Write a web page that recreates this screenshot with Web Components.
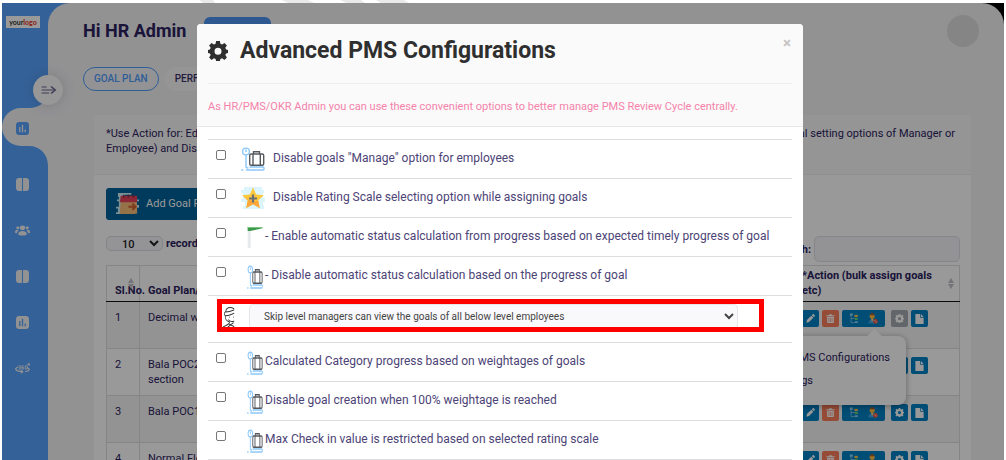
<!DOCTYPE html>
<html lang="en">
<head>
<meta charset="utf-8">
<title>Advanced PMS Configurations</title>
<style>
  html, body { margin: 0; height: 100%; background: #fff; }
  body { font-family: Roboto, "Liberation Sans", sans-serif; color: #2c2260; overflow: hidden; }
</style>
</head>
<body>
<pms-app></pms-app>

<script>
const define = (name, html, setup) => {
  const tpl = document.createElement('template');
  tpl.innerHTML = '<style>*{box-sizing:border-box}:host([hidden]){display:none}</style>' + html;
  customElements.define(name, class extends HTMLElement {
    connectedCallback() {
      if (this.shadowRoot) return;
      this.attachShadow({ mode: 'open' }).append(tpl.content.cloneNode(true));
      if (setup) setup.call(this, this.shadowRoot);
    }
  });
};

const ICONS = {
  gear: '<path fill="currentColor" fill-rule="evenodd" d="M9.700 0h4.600l.6 3.300 2 .9 2.800-1.900 3 3-1.900 2.800.9 2 2.300.6v3.600l-2.300.6-.9 2 1.900 2.800-3 3-2.800-1.900-2 .9-.6 2.300H9.700l-.6-2.300-2-.9-2.800 1.900-3-3 1.900-2.800-.9-2L0 14.300v-3.600l2.300-.6.9-2-1.900-2.800 3-3 2.800 1.900 2-.9zM12 8a4.200 4.200 0 1 0 0 8.400A4.200 4.200 0 1 0 12 8z"/>',
  luggage: '<g fill="none" stroke="#8cc8fa" stroke-width="1.400" stroke-linecap="round"><circle cx="5" cy="4.500" r="3.400"/><path d="M5 8v11.500M5 3v1.600M9 20h13c1.400 0 1.400 3 0 3H5.500M.8 23h1M5 19.500c0 1.500 1 1.500 2 1.500"/></g><g fill="#fff" stroke="#55595e" stroke-width="1.400"><path d="M12.500 7V4.800h6V7" fill="none"/><rect x="8.700" y="7" width="14" height="11.300" rx="1.500"/><path d="M12 7v11.300M19.300 7v11.300"/></g>',
  star: '<path d="M3 1h18v3h2v3h-1v5h2v4h-2v3h1v4H2v-3h2v-4H0v-3h2V7H0V4h3z" fill="#dcf5fc"/><path d="M12 1.500l3.200 6.900 7.600.9-5.600 5.200 1.500 7.500L12 18.300 5.300 22l1.500-7.500L1.200 9.300l7.600-.9z" fill="#fdc83b"/><path d="M1.200 9.300l5.600 5.200L5.300 22l6.700-3.700 6.700 3.700-1.500-7.500c-5 2-10 0-16-5.200z" fill="#fda63a"/><path d="M12 8.500v8M8 12.500h8" stroke="#6b6f78" stroke-width="2.200"/>',
  flag: '<path d="M1 1h4.500v21H1z" fill="#e6eaeb"/><path d="M1 1h22v1.200L5 5H1z" fill="#3d9a4a"/><path d="M1 1h22v1H1z" fill="#79c580"/>',
  person: '<g fill="none" stroke="#333" stroke-width="1.300" stroke-linecap="round"><path d="M22 2C15-1 7 1 7 5.500 3 7 4 9 6 10.500c-1 4 3 6.500 8 7.500M7 6c6 0 10-1 15-2.500M6 10.500c7 0 10-1.500 16-3"/><path d="M12 15.500c3 2 6 2.500 10 1.500M14 18c0 3-7 4-12 6M21 19l-10 5M13 20.500l9 3"/><path d="M14 12h.3M21 12h.3"/></g>',
  toggle: '<g fill="none" stroke="currentColor" stroke-width="2.400"><path d="M1 6h8M1 12h21M1 18h12"/><path d="M16 5l7 7-7 7"/></g>',
  chart: '<rect width="24" height="24" rx="6" fill="currentColor"/><path d="M7 9v10M12 5v14M17 14v5" stroke="var(--bars)" stroke-width="2.400"/>',
  columns: '<path d="M6 0h5v24H6a6 6 0 0 1-6-6V6a6 6 0 0 1 6-6zM13 0h5a6 6 0 0 1 6 6v12a6 6 0 0 1-6 6h-5z" fill="currentColor"/>',
  users: '<g fill="currentColor"><circle cx="12" cy="7" r="4.200"/><circle cx="4.500" cy="7" r="2.600"/><circle cx="19.500" cy="7" r="2.600"/><path d="M5 19c0-8 14-8 14 0 0 3-14 3-14 0zM0 15c0-4 3-5 6-4-2 2-3 4-3 6-2 0-3-.5-3-2zM24 15c0-4-3-5-6-4 2 2 3 4 3 6 2 0 3-.5 3-2z"/></g>',
  r360: '<g fill="none" stroke="currentColor" stroke-width="2"><path d="M5 9c-6 3-5 7 4 8.500l3 .3M19 10c5 2 6 6-3 7.700M9 14.500l3.500 3.300L9 21"/><path d="M5.500 7h3v6h-3M6 10h2M11 13V7h3M11 10h3v3h-3M16.500 7h3v6h-3z" stroke-width="1.300"/><circle cx="22" cy="4.500" r="1"/></g>',
  calendar: '<path d="M2 0h14v2H9v2h9v3h6v2h-3v4h3v3h-4v3h2v3H5v1H0v-2h2v-4H0v-2h3V9H1V7h2V4H2z" fill="#cdeff8"/><path d="M5 8h17v14l-3 1H4z" fill="#fbbf7b"/><path d="M5 3h17v7H4z" fill="#e8415d"/><path d="M8 2v3M13 2v3M18 2v3" stroke="#7d2f48" stroke-width="1.600"/><path d="M13 15h7M17 11.500l3.500 3.500-3.500 3.500" fill="none" stroke="#d4632d" stroke-width="2"/>',
  pencil: '<path d="M1 23l1.500-7L14 4.500l5.500 5.500L8 21.500zM15.500 3L18 .8c1-.8 2-.8 3 0L23.200 3c.8 1 .8 2 0 3L21 8.500z" fill="currentColor"/>',
  trash: '<path d="M1 3h7l1-2.500h6L16 3h7v3H1z" fill="currentColor"/><path fill="currentColor" fill-rule="evenodd" d="M3 7.500h18V21c0 2-1 3-3 3H6c-2 0-3-1-3-3zM7 10v11h1.600V10zM11.200 10v11h1.600V10zM15.400 10v11H17V10z"/>',
  file: '<path d="M1 0h13v9h9v15H1z" fill="currentColor"/><path d="M16 0l7 7h-7z" fill="currentColor"/>',
  tree: '<g stroke="#a9d8f0" stroke-width="1.500" fill="none"><path d="M5 4v17h9M5 12h9"/></g><path d="M2 1h7v5H2zM14 18h7v4h-7z" fill="#8fd3f2"/><path d="M13 4h8v5h-8z" fill="#ffc94d"/><path d="M14 11h7v4h-7z" fill="#6fdc6a"/>',
  userblock: '<circle cx="10" cy="7" r="6" fill="#ffbf3f"/><path d="M5 5c0-7 10-7 10 0z" fill="#a65b2b"/><path d="M1 23c0-6 4-9 9-9s9 3 9 9z" fill="#3fa4e8"/><path d="M7 13h6l-3 7z" fill="#ffd58a"/><circle cx="18" cy="18" r="5.500" fill="#f0553f"/><path d="M14.500 15l7 6" stroke="#fff" stroke-width="1.400"/>'
};

define('app-icon', `<style>
  :host { display: block; flex: none; width: 13px; height: 13px; }
  svg { display: block; width: 100%; height: 100%; overflow: visible; }
</style><svg viewBox="0 0 24 24" preserveAspectRatio="none" aria-hidden="true"></svg>`,
function (root) { root.querySelector('svg').innerHTML = ICONS[this.getAttribute('name')] || ''; });

define('top-strip', `<style>
  :host { display: block; height: 3px; overflow: hidden; }
  svg { display: block; }
</style><svg width="420" height="3" aria-hidden="true"><path fill="#e9e9e9" d="M197 0h14l2 3h-12zM280 0h26l6 3h-26zM338 0h21l4 3h-19zM374 0h28l5 3h-28z"/></svg>`);

define('pms-sidebar', `<style>
  :host { display: block; background: #58a3fd; color: #f4f4f4; --bars: #58a3fd; padding-top: 13px; }
  .logo { display: block; width: 34px; margin-left: 4px; background: #fff; color: #333; font: 700 7px/12px Lato, sans-serif; text-align: center; text-decoration: none; }
  .logo b { color: #e8392b; }
  nav { margin-top: 62px; display: flex; flex-direction: column; }
  a { color: inherit; }
  .item { display: flex; height: 46px; align-items: center; padding-left: 14px; }
  .active { position: relative; height: 76px; color: #58a3fd; --bars: #f3f3f6; margin-bottom: -5px; }
  .active svg { position: absolute; inset: 0; }
  .active app-icon { position: relative; }
  .wide { width: 15px; height: 13px; margin-left: -1px; }
</style>
<a class="logo" href="#" aria-label="Home">your<b>logo</b></a>
<nav aria-label="Main">
  <a class="item active" href="#" aria-label="Dashboard">
    <svg width="46" height="76" viewBox="0 0 46 76" aria-hidden="true"><path fill="#f3f3f6" d="M46 0C46 11 38 18 27 18H19a19 19 0 0 0 0 38h8C38 56 46 64 46 76z"/></svg>
    <app-icon name="chart"></app-icon></a>
  <a class="item" href="#" aria-label="Boards"><app-icon name="columns"></app-icon></a>
  <a class="item" href="#" aria-label="Team"><app-icon class="wide" name="users"></app-icon></a>
  <a class="item" href="#" aria-label="Plans"><app-icon name="columns"></app-icon></a>
  <a class="item" href="#" aria-label="Reports"><app-icon name="chart"></app-icon></a>
  <a class="item" href="#" aria-label="360 feedback"><app-icon class="wide" name="r360"></app-icon></a>
</nav>`);

define('page-header', `<style>
  :host { display: block; padding: 12px 25px 0 35px; }
  header { display: flex; align-items: center; height: 32px; }
  h1 { margin: 0; font-size: 18px; line-height: 28px; font-weight: 700; flex: none; min-width: 121px; }
  .primary { width: 67px; height: 28px; border: 0; border-radius: 6px; background: #4c94f0; }
  .avatar { width: 32px; height: 32px; margin-left: auto; border-radius: 50%; background: #dedede; border: 0; }
  .tabs { display: flex; gap: 5px; margin-top: 20px; }
  .tabs button { height: 24px; border: 1px solid #f9f9fb; border-radius: 12px; background: #f9f9fb; font: 500 10px/20px Roboto, sans-serif; color: #3a3166; padding: 0 10px; white-space: nowrap; }
  .tabs .on { border-color: #4f9bfa; color: #4f9bfa; background: #f6f6f9; }
</style>
<header><h1>Hi HR Admin</h1><button class="primary" aria-label="Create"></button><button class="avatar" aria-label="Profile"></button></header>
<div class="tabs"><button class="on">GOAL PLAN</button><button>PERFORMANCE</button></div>`);

define('action-buttons', `<style>
  :host { display: flex; gap: 3px; }
  button { display: flex; align-items: center; justify-content: center; gap: 9px; width: 17px; height: 17px; padding: 0; border: 0; border-radius: 2px; background: #0080c4; color: #fff; }
  app-icon { width: 9px; height: 9px; }
  .trash { background: #fb7d5c; }
  .group { width: 43px; margin-right: 3px; }
  .group app-icon { width: 10px; height: 11px; }
  :host([muted]) .gear { background: #a3a9b0; }
  .copy app-icon { height: 10px; }
</style>
<button aria-label="Edit"><app-icon name="pencil"></app-icon></button>
<button class="trash" aria-label="Delete"><app-icon name="trash"></app-icon></button>
<button class="group" aria-label="Assign"><app-icon name="tree"></app-icon><app-icon name="userblock"></app-icon></button>
<button class="gear" aria-label="Settings"><app-icon name="gear"></app-icon></button>
<button class="copy" aria-label="Copy"><app-icon name="file"></app-icon></button>`);

define('row-popover', `<style>
  :host { display: block; width: 190px; padding: 14px 16px 16px; border-radius: 8px; background: #fff; box-shadow: 0 1px 6px rgba(0,0,0,.35); }
  :host::before { content: ""; position: absolute; top: -5px; right: 26px; width: 11px; height: 11px; background: #fff; transform: rotate(45deg); }
  a { display: block; font-size: 11px; line-height: 16px; color: #2c2260; text-decoration: none; text-align: right; white-space: nowrap; }
  a + a { margin-top: 7px; padding-right: 77px; }
</style><a href="#">Advanced PMS Configurations</a><a href="#">Settings</a>`);

define('goal-panel', `<style>
  :host { display: block; margin: 24px 33px 0 46px; background: #fff; font-size: 11px; line-height: 15px; }
  .info { min-height: 60px; padding: 11px 12px; background: #f8f8f8; border-bottom: 1px solid #eee; }
  .info p { margin: 0; display: flex; justify-content: space-between; white-space: nowrap; }
  .info p span:last-child { padding-right: 4px; }
  .body { position: relative; padding: 13px 11px 13px 12px; }
  .add { display: flex; align-items: center; gap: 7px; height: 32px; width: 150px; padding: 0 10px; border: 0; border-radius: 3px; background: #006199; color: #fff; font: 400 11px/16px Roboto, sans-serif; white-space: nowrap; }
  .add app-icon { width: 23px; height: 22px; }
  .tools { display: flex; justify-content: space-between; align-items: flex-start; margin-top: 16px; font-weight: 700; }
  .tools label { display: flex; align-items: center; gap: 3px; }
  .tools select { width: 57px; height: 15px; border: 1px solid #dcdce4; border-radius: 5px; background: #f7f7fa; font: 500 11px/13px Roboto, sans-serif; color: #222; padding: 0 0 0 11px; }
  .tools input { width: 146px; height: 26px; border: 1px solid #dfdfe6; border-radius: 5px; background: #f5f5f8; }
  table { width: 100%; margin-top: 3px; border-collapse: collapse; table-layout: fixed; border-left: 1px solid #dedede; border-top: 1px solid #dedede; }
  th, td { padding: 8px; text-align: left; vertical-align: top; border-right: 1px solid #dedede; border-bottom: 1px solid #dedede; height: 47px; }
  thead th { height: 36px; padding: 2px 8px 3px; vertical-align: bottom; position: relative; border-bottom: 1px solid #111; white-space: nowrap; }
  th.act { white-space: normal; padding-right: 20px; }
  th i { position: absolute; right: 5px; top: 12px; width: 6px; height: 11px; }
  th i::before, th i::after { content: ""; position: absolute; left: 0; border: 3px solid transparent; }
  th i::before { top: -3px; border-bottom: 5px solid #c2c2c8; }
  th i::after { bottom: -3px; border-top: 5px solid #c2c2c8; }
  tbody tr:nth-child(odd) { background: #f6f6f6; }
  .n { width: 33px; } .a { width: 166px; }
  row-popover { position: absolute; right: 65px; top: 161px; }
</style>
<div class="info">
  <p><span>*Use Action for: Edit/Delete</span><span>goal setting options of Manager or</span></p>
  <p><span>Employee) and Disable</span></p>
</div>
<div class="body">
  <button class="add"><app-icon name="calendar"></app-icon>Add Goal Plan</button>
  <div class="tools">
    <label><select><option>10</option></select> records</label>
    <label>Search: <input type="search"></label>
  </div>
  <table>
    <colgroup><col class="n"><col><col class="a"></colgroup>
    <thead><tr><th>Sl.No.<i></i></th><th>Goal Plan/</th><th class="act">*Action (bulk assign goals etc)<i></i></th></tr></thead>
    <tbody>
      <tr><td>1</td><td>Decimal weightage</td><td><action-buttons muted></action-buttons></td></tr>
      <tr><td>2</td><td>Bala POC2<br>section</td><td><action-buttons></action-buttons></td></tr>
      <tr><td>3</td><td>Bala POC1</td><td><action-buttons></action-buttons></td></tr>
      <tr><td>4</td><td>Normal Flow</td><td><action-buttons></action-buttons></td></tr>
    </tbody>
  </table>
  <row-popover></row-popover>
</div>`);

define('config-option', `<style>
  :host { display: block; height: 39px; border-top: 1px solid #dedee0; }
  label { display: flex; align-items: flex-start; padding-left: 8px; }
  input { appearance: none; flex: none; width: 10px; height: 10px; margin: 10px 21px 0 0; border: 1px solid #767676; border-radius: 2px; background: #fff; }
  input:checked { background: #2c2260; }
  app-icon { width: 16px; height: 24px; margin: 8px 2px 0 0; }
  .text { font-size: 12px; line-height: 16px; margin-top: 10px; color: #4c4376; white-space: nowrap; }
  :host([wide]) input { margin-right: 15px; }
  :host([wide]) app-icon { width: 24px; height: 24px; margin: 7px 8px 0 0; }
</style><label><input type="checkbox"><app-icon></app-icon><span class="text"><slot></slot></span></label>`,
function (root) {
  const icon = document.createElement('app-icon');
  icon.setAttribute('name', this.getAttribute('icon') || 'luggage');
  root.querySelector('app-icon').replaceWith(icon);
});

define('config-select', `<style>
  :host { display: flex; position: relative; height: 47px; padding: 8px 54px 0 14px; border-top: 1px solid #dedee0; }
  app-icon { width: 13px; height: 20px; margin: 3px 14px 0 0; }
  select { flex: 1; min-width: 0; height: 25px; border: 1px solid #e6e6ea; border-radius: 4px; background: #f9f9fb; font: 400 10px/16px Roboto, sans-serif; color: #444; padding: 0 0 0 10px; }
  .mark { position: absolute; inset: 3px 28px auto 9px; height: 33px; border: 5px solid #f00; pointer-events: none; }
</style>
<app-icon name="person"></app-icon>
<select aria-label="Goal visibility"><option>Skip level managers can view the goals of all below level employees</option></select>
<div class="mark"></div>`);

define('config-modal', `<style>
  :host { display: block; border-radius: 4px; background: #fff; overflow: hidden; }
  header { position: relative; padding: 11px; background: #fafafa; border-bottom: 1px solid #e8e8e8; }
  h2 { display: flex; align-items: center; gap: 12px; margin: 0; font-size: 23px; line-height: 32px; font-weight: 700; color: #2f2f2f; }
  h2 app-icon { width: 20px; height: 20px; }
  hr { height: 1px; border: 0; margin: 16px 0 0; background: #efefef; }
  p { margin: 15px 0 0; font-size: 11px; line-height: 16px; color: #f582aa; }
  .close { position: absolute; top: 11px; right: 10px; width: 12px; height: 16px; padding: 0; border: 0; background: none; font: 700 15px/16px Roboto, sans-serif; color: #c4c4c4; }
  .list { margin: 12px 11px; border-bottom: 1px solid #dedee0; }
</style>
<header>
  <h2><app-icon name="gear"></app-icon>Advanced PMS Configurations</h2>
  <button class="close" aria-label="Close">×</button>
  <hr>
  <p>As HR/PMS/OKR Admin you can use these convenient options to better manage PMS Review Cycle centrally.</p>
</header>
<div class="list"><slot></slot></div>`);

define('pms-app', `<style>
  :host { display: flex; flex-direction: column; height: 100vh; padding: 0 2px; overflow: hidden; }
  .frame { position: relative; flex: 1; min-height: 0; display: grid; grid-template-columns: 46px 1fr; overflow: hidden; background: linear-gradient(90deg, #58a3fd 50%, #000 50%); }
  main { min-width: 0; background: #f3f3f6; border-radius: 22px 22px 0 0; }
  .toggle { position: absolute; left: 31px; top: 72px; width: 30px; height: 30px; display: grid; place-items: center; border: 0; border-radius: 50%; padding: 0; background: #fcfcfc; color: #6c6590; box-shadow: 0 0 14px rgba(0,0,0,.15); }
  .toggle app-icon { width: 15px; height: 12px; }
  .backdrop { position: absolute; inset: 0; padding: 21px 6px 0 0; background: rgba(0,0,0,.4); }
  config-modal { width: 606px; max-width: 100%; margin: 0 auto; }
</style>
<top-strip></top-strip>
<div class="frame">
  <pms-sidebar></pms-sidebar>
  <main><page-header></page-header><goal-panel></goal-panel></main>
  <button class="toggle" aria-label="Expand menu"><app-icon name="toggle"></app-icon></button>
  <div class="backdrop">
    <config-modal role="dialog" aria-modal="true" aria-label="Advanced PMS Configurations">
      <config-option wide>Disable goals "Manage" option for employees</config-option>
      <config-option wide icon="star">Disable Rating Scale selecting option while assigning goals</config-option>
      <config-option icon="flag">- Enable automatic status calculation from progress based on expected timely progress of goal</config-option>
      <config-option>- Disable automatic status calculation based on the progress of goal</config-option>
      <config-select></config-select>
      <config-option>Calculated Category progress based on weightages of goals</config-option>
      <config-option>Disable goal creation when 100% weightage is reached</config-option>
      <config-option>Max Check in value is restricted based on selected rating scale</config-option>
    </config-modal>
  </div>
</div>`);
</script>
</body>
</html>
